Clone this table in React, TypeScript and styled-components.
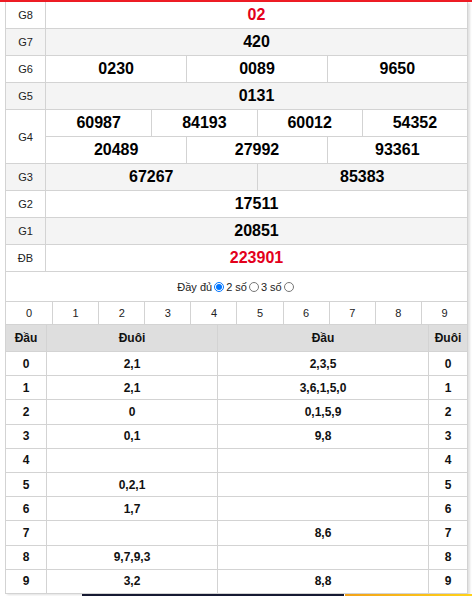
import React from 'react';
import styled, { createGlobalStyle } from 'styled-components';

const GlobalStyle = createGlobalStyle`
  html, body { margin: 0; padding: 0; background: #fff; }
  body { font-family: "Liberation Sans", Arial, sans-serif; color: #000; }
  * { box-sizing: border-box; }
`;

const LINE = '#d3d3d3';

const Page = styled.div`
  width: 472px;
  height: 596px;
  overflow: hidden;
`;

const TopLine = styled.div`
  height: 2px;
  background: #ee1c25;
`;

const Card = styled.div`
  margin-left: 5px;
  width: 463px;
  border-left: 1px solid ${LINE};
  border-right: 1px solid ${LINE};
  box-shadow: 2px 1px 2px rgba(0, 0, 0, 0.12);
  background: #fff;
`;

const PrizeRow = styled.div<{ $shade?: boolean }>`
  display: grid;
  grid-template-columns: 40px 1fr;
  border-bottom: 1px solid ${LINE};
  background: ${(p) => (p.$shade ? '#f4f4f4' : '#fff')};
`;

const Label = styled.div`
  border-right: 1px solid ${LINE};
  display: flex;
  align-items: center;
  justify-content: center;
  font-size: 11px;
  color: #222;
`;

const Stack = styled.div`
  display: flex;
  flex-direction: column;
`;

const NumLine = styled.div<{ $cols: number }>`
  display: grid;
  grid-template-columns: repeat(${(p) => p.$cols}, 1fr);
  & + & { border-top: 1px solid ${LINE}; }
`;

const Num = styled.div<{ $red?: boolean }>`
  height: 26px;
  display: flex;
  align-items: center;
  justify-content: center;
  font-size: 16px;
  font-weight: bold;
  color: ${(p) => (p.$red ? '#e3001b' : '#000')};
  & + & { border-left: 1px solid ${LINE}; }
`;

const Options = styled.div`
  height: 29px;
  display: flex;
  align-items: center;
  justify-content: center;
  font-size: 11px;
  color: #222;
`;

const Radio = styled.input`
  width: 10px;
  height: 10px;
  margin: 0 2px;
`;

const DigitRow = styled.div`
  display: grid;
  grid-template-columns: repeat(10, 1fr);
  border-top: 1px solid ${LINE};
  border-bottom: 1px solid ${LINE};
`;

const Digit = styled.div`
  height: 22px;
  display: flex;
  align-items: center;
  justify-content: center;
  font-size: 11px;
  color: #222;
  & + & { border-left: 1px solid ${LINE}; }
`;

const LotoRow = styled.div<{ $head?: boolean }>`
  display: grid;
  grid-template-columns: 40px 171px 211px 1fr;
  border-bottom: 1px solid ${LINE};
  background: ${(p) => (p.$head ? '#dedede' : '#fff')};
  height: ${(p) => (p.$head ? '27px' : '24.2px')};
`;

const LotoCell = styled.div`
  display: flex;
  align-items: center;
  justify-content: center;
  font-size: 12px;
  font-weight: bold;
  color: #111;
  & + & { border-left: 1px solid ${LINE}; }
`;

const AdStrip = styled.div`
  display: flex;
  height: 4px;
  padding-left: 82px;
`;

const AdDark = styled.div`
  width: 262px;
  background: #161a33;
`;

const AdGap = styled.div`
  width: 1px;
  background: #fff;
`;

const AdYellow = styled.div`
  flex: 1;
  background: linear-gradient(90deg, #f2a21a, #ffd21a);
`;

type Prize = { label: string; lines: string[][]; red?: boolean };

const prizes: Prize[] = [
  { label: 'G8', lines: [['02']], red: true },
  { label: 'G7', lines: [['420']] },
  { label: 'G6', lines: [['0230', '0089', '9650']] },
  { label: 'G5', lines: [['0131']] },
  { label: 'G4', lines: [['60987', '84193', '60012', '54352'], ['20489', '27992', '93361']] },
  { label: 'G3', lines: [['67267', '85383']] },
  { label: 'G2', lines: [['17511']] },
  { label: 'G1', lines: [['20851']] },
  { label: 'ĐB', lines: [['223901']], red: true },
];

const loto: [string, string, string, string][] = [
  ['0', '2,1', '2,3,5', '0'],
  ['1', '2,1', '3,6,1,5,0', '1'],
  ['2', '0', '0,1,5,9', '2'],
  ['3', '0,1', '9,8', '3'],
  ['4', '', '', '4'],
  ['5', '0,2,1', '', '5'],
  ['6', '1,7', '', '6'],
  ['7', '', '8,6', '7'],
  ['8', '9,7,9,3', '', '8'],
  ['9', '3,2', '8,8', '9'],
];

export default function App() {
  return (
    <Page>
      <GlobalStyle />
      <TopLine />
      <Card>
        {prizes.map((p, i) => (
          <PrizeRow key={p.label} $shade={i % 2 === 1}>
            <Label>{p.label}</Label>
            <Stack>
              {p.lines.map((line, j) => (
                <NumLine key={j} $cols={line.length}>
                  {line.map((n, k) => (
                    <Num key={k} $red={p.red}>{n}</Num>
                  ))}
                </NumLine>
              ))}
            </Stack>
          </PrizeRow>
        ))}
        <Options>
          Đầy đủ<Radio type="radio" name="mode" defaultChecked />2 số
          <Radio type="radio" name="mode" />3 số
          <Radio type="radio" name="mode" />
        </Options>
        <DigitRow>
          {Array.from({ length: 10 }, (_, i) => (
            <Digit key={i}>{i}</Digit>
          ))}
        </DigitRow>
        <LotoRow $head>
          <LotoCell>Đầu</LotoCell>
          <LotoCell>Đuôi</LotoCell>
          <LotoCell>Đầu</LotoCell>
          <LotoCell>Đuôi</LotoCell>
        </LotoRow>
        {loto.map((r) => (
          <LotoRow key={r[0]}>
            {r.map((c, k) => (
              <LotoCell key={k}>{c}</LotoCell>
            ))}
          </LotoRow>
        ))}
      </Card>
      <AdStrip>
        <AdDark />
        <AdGap />
        <AdYellow />
      </AdStrip>
    </Page>
  );
}
